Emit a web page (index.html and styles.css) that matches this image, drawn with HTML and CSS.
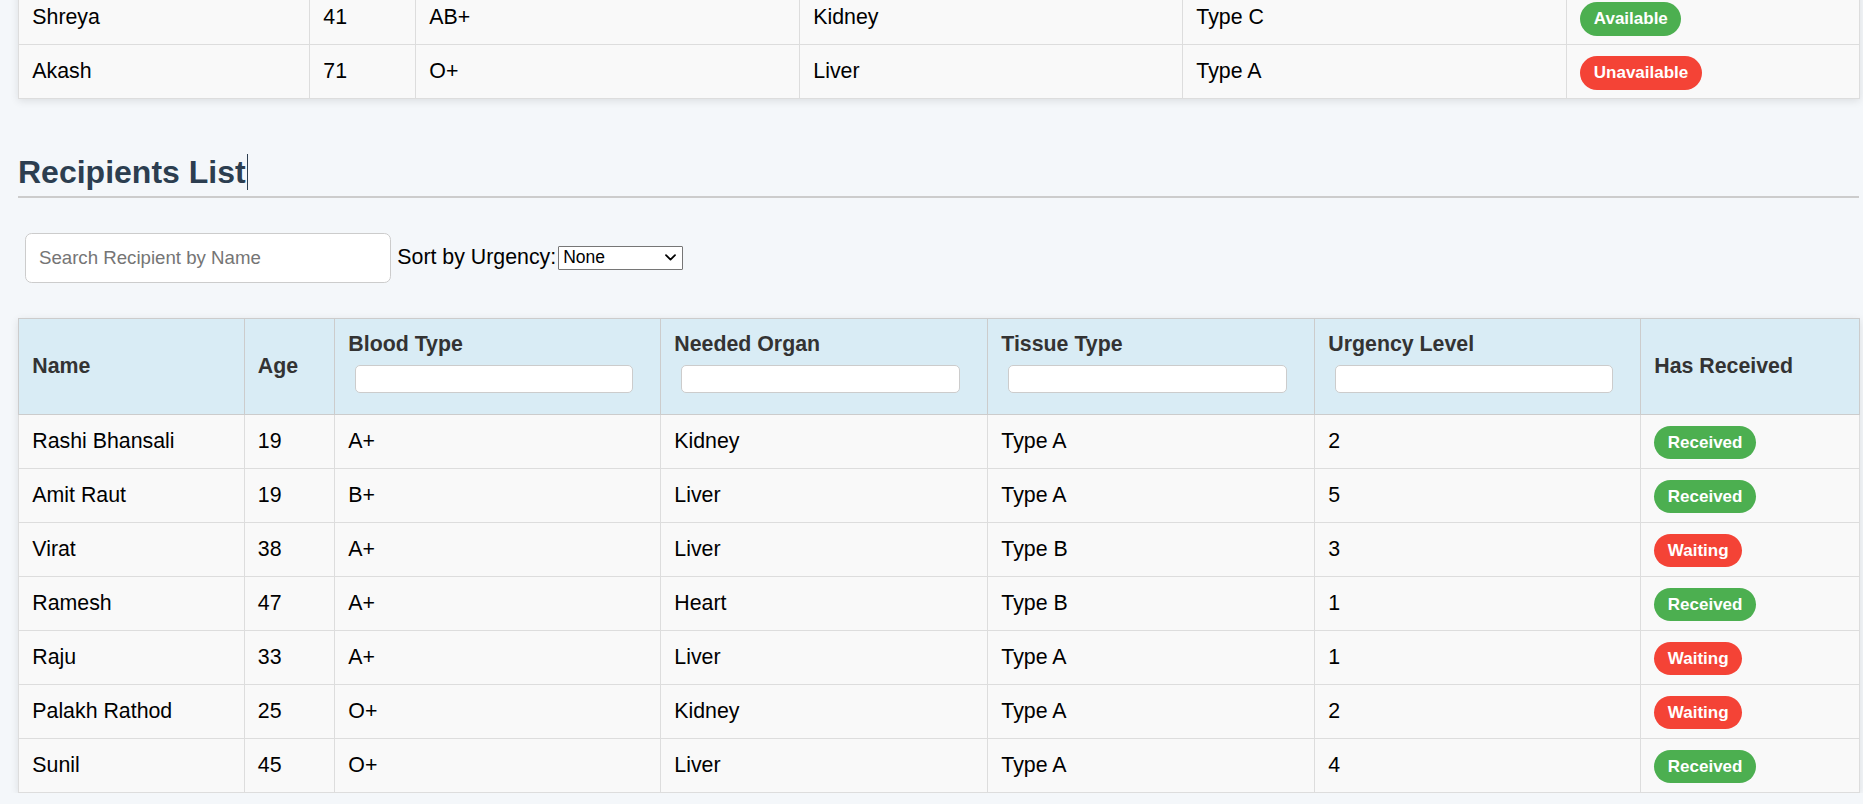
FILE: index.html
```html
<!DOCTYPE html>
<html lang="en">
<head>
<meta charset="utf-8">
<title>Organ Donation Dashboard</title>
<link rel="stylesheet" href="styles.css">
</head>
<body>
<div class="page">
  <table class="data donors">
    <colgroup>
      <col class="d1"><col class="d2"><col class="d3"><col class="d4"><col class="d5"><col class="d6">
    </colgroup>
    <tbody>
      <tr><td>Shreya</td><td>41</td><td>AB+</td><td>Kidney</td><td>Type C</td><td><span class="badge ok">Available</span></td></tr>
      <tr><td>Akash</td><td>71</td><td>O+</td><td>Liver</td><td>Type A</td><td><span class="badge bad">Unavailable</span></td></tr>
    </tbody>
  </table>

  <h2 class="section-title">Recipients List<span class="caret"></span></h2>

  <div class="controls">
    <input class="search" type="text" placeholder="Search Recipient by Name">
    <label class="sort-label" for="sort">Sort by Urgency:</label>
    <span class="select-wrap">
      <select id="sort" class="sort">
        <option>None</option>
        <option>High to Low</option>
        <option>Low to High</option>
      </select>
      <svg class="chevron" width="11" height="7" viewBox="0 0 11 7" aria-hidden="true"><path d="M1 1.2 L5.5 5.6 L10 1.2" fill="none" stroke="#000" stroke-width="1.8" stroke-linecap="round" stroke-linejoin="round"/></svg>
    </span>
  </div>

  <table class="data recipients">
    <colgroup>
      <col class="r1"><col class="r2"><col class="r3"><col class="r4"><col class="r5"><col class="r6"><col class="r7">
    </colgroup>
    <thead>
      <tr>
        <th>Name</th>
        <th>Age</th>
        <th>Blood Type<input class="filter" type="text"></th>
        <th>Needed Organ<input class="filter" type="text"></th>
        <th>Tissue Type<input class="filter" type="text"></th>
        <th>Urgency Level<input class="filter" type="text"></th>
        <th>Has Received</th>
      </tr>
    </thead>
    <tbody>
      <tr><td>Rashi Bhansali</td><td>19</td><td>A+</td><td>Kidney</td><td>Type A</td><td>2</td><td><span class="badge ok">Received</span></td></tr>
      <tr><td>Amit Raut</td><td>19</td><td>B+</td><td>Liver</td><td>Type A</td><td>5</td><td><span class="badge ok">Received</span></td></tr>
      <tr><td>Virat</td><td>38</td><td>A+</td><td>Liver</td><td>Type B</td><td>3</td><td><span class="badge bad">Waiting</span></td></tr>
      <tr><td>Ramesh</td><td>47</td><td>A+</td><td>Heart</td><td>Type B</td><td>1</td><td><span class="badge ok">Received</span></td></tr>
      <tr><td>Raju</td><td>33</td><td>A+</td><td>Liver</td><td>Type A</td><td>1</td><td><span class="badge bad">Waiting</span></td></tr>
      <tr><td>Palakh Rathod</td><td>25</td><td>O+</td><td>Kidney</td><td>Type A</td><td>2</td><td><span class="badge bad">Waiting</span></td></tr>
      <tr><td>Sunil</td><td>45</td><td>O+</td><td>Liver</td><td>Type A</td><td>4</td><td><span class="badge ok">Received</span></td></tr>
    </tbody>
  </table>
</div>
</body>
</html>
```

FILE: styles.css
```css
* {
  box-sizing: border-box;
}

html,
body {
  margin: 0;
  padding: 0;
  background: #f4f7fa;
}

body {
  font-family: "Liberation Sans", Arial, sans-serif;
  font-size: 21.33px;
  color: #000;
  overflow: hidden;
}

.page {
  width: 1859px;
  padding-left: 18px;
  margin-top: -10px;
}

/* ---------- tables ---------- */
.data {
  width: 1841px;
  border-collapse: collapse;
  table-layout: fixed;
  background: #f9f9f9;
  box-shadow: 0 2px 8px rgba(0, 0, 0, 0.1);
}

.data td {
  border: 1px solid #dddddd;
  padding: 14.25px 13.3px;
  line-height: 24.5px;
  text-align: left;
  vertical-align: middle;
}

.data th {
  background: #d9ecf5;
  border: 1px solid #cccccc;
  padding: 13.3px;
  line-height: 24.5px;
  text-align: left;
  vertical-align: middle;
  font-weight: bold;
  color: #333333;
}

.d1 { width: 291px; }
.d2 { width: 106px; }
.d3 { width: 384px; }
.d4 { width: 383px; }
.d5 { width: 384px; }
.d6 { width: 293px; }

.r1 { width: 225.5px; }
.r2 { width: 90.5px; }
.r3 { width: 326px; }
.r4 { width: 327px; }
.r5 { width: 327px; }
.r6 { width: 326px; }
.r7 { width: 219px; }

.filter {
  display: block;
  width: calc(100% - 20px);
  height: 28px;
  margin: 8.3px 0 7.7px 6.7px;
  border: 1px solid #cccccc;
  border-radius: 5px;
  background: #ffffff;
  font-family: inherit;
  font-size: 16px;
}

/* ---------- badges ---------- */
.badge {
  display: inline;
  padding: 7.35px 13.5px;
  border-radius: 20px;
  color: #ffffff;
  font-weight: bold;
  font-size: 17px;
  line-height: 17px;
}

.badge.ok {
  background: #4caf50;
}

.badge.bad {
  background: #f44336;
}

/* ---------- heading ---------- */
.section-title {
  margin: 55px 0 27.7px;
  padding-bottom: 5.5px;
  border-bottom: 2px solid #cccccc;
  font-size: 32px;
  line-height: 36.8px;
  font-weight: bold;
  color: #2c3e50;
}

.caret {
  display: inline-block;
  width: 1.3px;
  height: 36px;
  margin-left: 1px;
  background: #2c3e50;
  vertical-align: top;
}

/* ---------- controls ---------- */
.controls {
  display: flex;
  align-items: center;
}

.search {
  width: 366px;
  height: 50.4px;
  margin: 6.67px;
  padding: 0 13.3px;
  border: 1px solid #cccccc;
  border-radius: 6.67px;
  background: #ffffff;
  font-family: inherit;
  font-size: 18.67px;
  color: #000;
}

.search::placeholder {
  color: #757575;
}

.sort-label {
  font-size: 21.33px;
  padding-right: 2px;
}

.select-wrap {
  position: relative;
  display: inline-block;
  width: 125px;
  height: 23.7px;
}

.sort {
  appearance: none;
  -webkit-appearance: none;
  display: block;
  width: 125px;
  height: 23.7px;
  padding: 0 20px 0 4px;
  font-family: inherit;
  font-size: 17.5px;
  line-height: 21px;
  border: 1px solid #767676;
  border-radius: 1px;
  background-color: #ffffff;
  color: #000;
}

.chevron {
  position: absolute;
  right: 7px;
  top: 8.5px;
  pointer-events: none;
}

.recipients {
  margin-top: 28px;
}
```
